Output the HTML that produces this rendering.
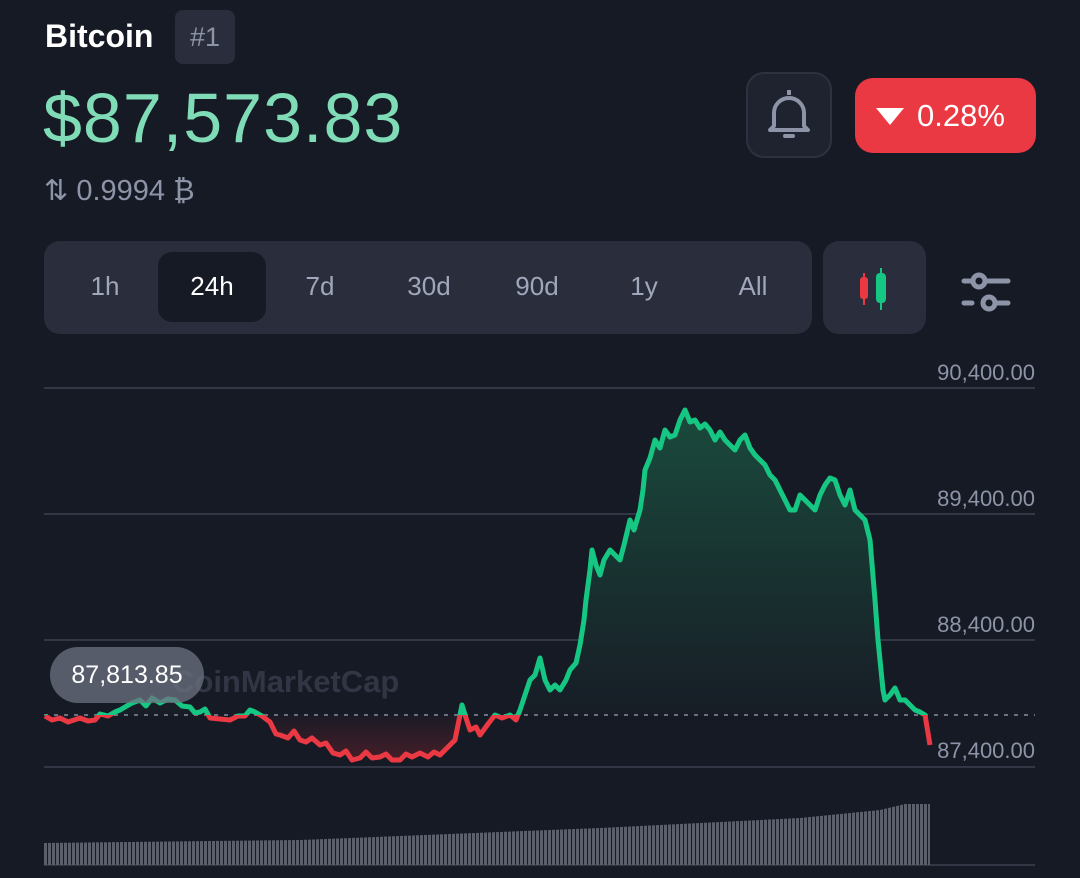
<!DOCTYPE html>
<html><head><meta charset="utf-8"><style>
*{margin:0;padding:0;box-sizing:border-box}
body{width:1080px;height:878px;background:#161a25;font-family:"Liberation Sans",sans-serif;position:relative;overflow:hidden;color:#fff}
.a{position:absolute}
.tab{position:absolute;top:271px;font-size:26px;color:#a1a7bb;width:100px;text-align:center}
</style></head><body>
<div class="a" style="left:45px;top:18px;font-size:32px;font-weight:bold;color:#fff">Bitcoin</div>
<div class="a" style="left:175px;top:10px;width:60px;height:54px;border-radius:8px;background:#2a2e3c;color:#8e94a8;font-size:27px;line-height:54px;text-align:center">#1</div>
<div class="a" style="left:43px;top:78px;font-size:70px;color:#7fdcb6;letter-spacing:1px">$87,573.83</div>
<div class="a" style="left:44px;top:173px;font-size:29px;color:#8e94a8">⇅ 0.9994 ₿</div>
<div class="a" style="left:746px;top:72px;width:86px;height:86px;border-radius:18px;background:#1f2330;border:2px solid #2e3240"></div>
<svg class="a" style="left:760px;top:86px" width="58" height="58" viewBox="0 0 58 58"><path d="M29 4v5M14 40V27a15 15 0 0 1 30 0v13l4 4H10z" fill="none" stroke="#8e94a8" stroke-width="4" stroke-linejoin="round"/><rect x="23" y="48" width="12" height="4" rx="2" fill="#8e94a8"/></svg>
<div class="a" style="left:855px;top:78px;width:181px;height:75px;border-radius:18px;background:#ea3943;font-size:31px;line-height:75px;color:#fff;padding-left:62px">0.28%</div>
<svg class="a" style="left:876px;top:108px" width="28" height="18"><path d="M0 0h28L14 17z" fill="#fff"/></svg>
<div class="a" style="left:44px;top:241px;width:768px;height:93px;border-radius:16px;background:#2a2e3c"></div>
<div class="a" style="left:158px;top:252px;width:108px;height:70px;border-radius:14px;background:#161a25"></div>
<div class="tab" style="left:55px">1h</div>
<div class="tab" style="left:162px;color:#fff">24h</div>
<div class="tab" style="left:270px">7d</div>
<div class="tab" style="left:379px">30d</div>
<div class="tab" style="left:487px">90d</div>
<div class="tab" style="left:594px">1y</div>
<div class="tab" style="left:703px">All</div>
<div class="a" style="left:823px;top:241px;width:103px;height:93px;border-radius:16px;background:#2a2e3c"></div>
<svg class="a" style="left:855px;top:265px" width="40" height="50"><rect x="5" y="12" width="8" height="22" rx="3" fill="#ea3943"/><rect x="8" y="8" width="2" height="32" fill="#ea3943"/><rect x="21" y="8" width="10" height="30" rx="4" fill="#16c784"/><rect x="25" y="3" width="2" height="42" fill="#16c784"/></svg>
<svg class="a" style="left:960px;top:265px" width="54" height="48" fill="none" stroke="#8e94a8" stroke-width="5" stroke-linecap="round"><path d="M4 16h8M26 16h22M4 38h8M36 38h12"/><circle cx="19" cy="16" r="6"/><circle cx="29" cy="38" r="6"/></svg>
<svg class="a" style="left:0;top:0" width="1080" height="878">
<defs>
<linearGradient id="g" x1="0" y1="410" x2="0" y2="715" gradientUnits="userSpaceOnUse"><stop offset="0" stop-color="#1a4a3c"/><stop offset="1" stop-color="#171d26"/></linearGradient>
<linearGradient id="r" x1="0" y1="715" x2="0" y2="765" gradientUnits="userSpaceOnUse"><stop offset="0" stop-color="#1a1b26"/><stop offset="1" stop-color="#4a1e28"/></linearGradient>
<clipPath id="up"><rect x="0" y="0" width="1080" height="715"/></clipPath>
<clipPath id="dn"><rect x="0" y="715" width="1080" height="200"/></clipPath>
<pattern id="vb" width="4" height="10" patternUnits="userSpaceOnUse"><rect width="3" height="10" fill="#5b5f6b"/></pattern>
<path id="p" d="M45,716 L52,720 L60,718 L68,722 L80,718 L88,721 L95,720 L100,714 L108,716 L115,712 L120,710 L125,707 L132,703 L140,700 L146,706 L152,698 L160,703 L168,699 L175,700 L182,706 L190,707 L195,713 L200,712 L205,709 L210,718 L220,719 L230,720 L238,716 L245,716 L250,710 L255,712 L262,716 L270,722 L276,734 L280,735 L288,738 L294,731 L300,740 L306,742 L312,738 L320,745 L326,743 L333,753 L340,755 L346,751 L352,760 L360,758 L366,752 L372,758 L380,757 L386,754 L392,760 L400,760 L406,754 L412,757 L420,753 L428,757 L434,752 L440,755 L448,747 L455,740 L462,705 L466,718 L470,730 L476,727 L480,735 L488,724 L495,715 L502,718 L510,715 L516,720 L520,710 L526,692 L530,680 L535,675 L540,658 L545,680 L550,690 L555,685 L560,690 L566,680 L570,670 L576,663 L580,645 L584,620 L586,600 L590,570 L592,550 L596,565 L600,575 L604,560 L610,550 L616,556 L620,560 L624,545 L630,520 L634,530 L640,510 L643,490 L645,470 L650,458 L655,440 L660,448 L665,430 L670,437 L675,435 L680,420 L685,410 L690,422 L695,420 L700,428 L705,424 L710,430 L715,440 L720,432 L725,440 L730,445 L735,450 L740,440 L745,435 L750,448 L755,455 L760,460 L765,465 L770,475 L775,480 L780,490 L785,500 L790,510 L795,510 L800,495 L805,500 L810,505 L815,510 L820,495 L825,485 L830,478 L835,480 L840,495 L845,505 L850,490 L855,510 L860,515 L865,520 L870,540 L875,600 L878,640 L880,660 L883,690 L885,700 L890,695 L895,688 L900,700 L905,700 L910,705 L915,710 L920,712 L925,715 L930,745"/>
</defs>
<g stroke="#333745" stroke-width="2"><path d="M44 388H1035M44 514H1035M44 640H1035M44 767H1035M44 865H1035"/></g>
<g fill="#8e94a8" font-size="22" text-anchor="end"><text x="1035" y="380">90,400.00</text><text x="1035" y="506">89,400.00</text><text x="1035" y="632">88,400.00</text><text x="1035" y="758">87,400.00</text></g>
<text x="172" y="692" font-size="31" font-weight="bold" fill="#323644">CoinMarketCap</text>
<path fill="url(#g)" clip-path="url(#up)" d="M45,715 L45,716 L100,714 L108,716 L115,712 L120,710 L125,707 L132,703 L140,700 L146,706 L152,698 L160,703 L168,699 L175,700 L182,706 L190,707 L195,713 L200,712 L205,709 L210,715 L245,715 L250,710 L255,712 L262,715 L458,715 L462,705 L466,715 L510,715 L516,715 L520,710 L526,692 L530,680 L535,675 L540,658 L545,680 L550,690 L555,685 L560,690 L566,680 L570,670 L576,663 L580,645 L584,620 L586,600 L590,570 L592,550 L596,565 L600,575 L604,560 L610,550 L616,556 L620,560 L624,545 L630,520 L634,530 L640,510 L643,490 L645,470 L650,458 L655,440 L660,448 L665,430 L670,437 L675,435 L680,420 L685,410 L690,422 L695,420 L700,428 L705,424 L710,430 L715,440 L720,432 L725,440 L730,445 L735,450 L740,440 L745,435 L750,448 L755,455 L760,460 L765,465 L770,475 L775,480 L780,490 L785,500 L790,510 L795,510 L800,495 L805,500 L810,505 L815,510 L820,495 L825,485 L830,478 L835,480 L840,495 L845,505 L850,490 L855,510 L860,515 L865,520 L870,540 L875,600 L878,640 L880,660 L883,690 L885,700 L890,695 L895,688 L900,700 L905,700 L910,705 L915,710 L920,712 L925,715 Z"/>
<path fill="url(#r)" d="M262,715 L270,722 L276,734 L280,735 L288,738 L294,731 L300,740 L306,742 L312,738 L320,745 L326,743 L333,753 L340,755 L346,751 L352,760 L360,758 L366,752 L372,758 L380,757 L386,754 L392,760 L400,760 L406,754 L412,757 L420,753 L428,757 L434,752 L440,755 L448,747 L455,740 L458,715 Z"/>
<path d="M44 715H1035" stroke="#6b7080" stroke-width="2" stroke-dasharray="4 6"/>
<polygon points="44,843 300,840 600,828 800,818 880,810 905,804 930,804 930,865 44,865" fill="url(#vb)"/>
<use href="#p" fill="none" stroke="#16c784" stroke-width="5" stroke-linejoin="round" clip-path="url(#up)"/>
<use href="#p" fill="none" stroke="#ea3943" stroke-width="5" stroke-linejoin="round" clip-path="url(#dn)"/>
</svg>
<div class="a" style="left:50px;top:647px;width:154px;height:56px;border-radius:28px;background:rgba(110,115,130,.75);color:#fff;font-size:25px;line-height:56px;text-align:center">87,813.85</div>
</body></html>
